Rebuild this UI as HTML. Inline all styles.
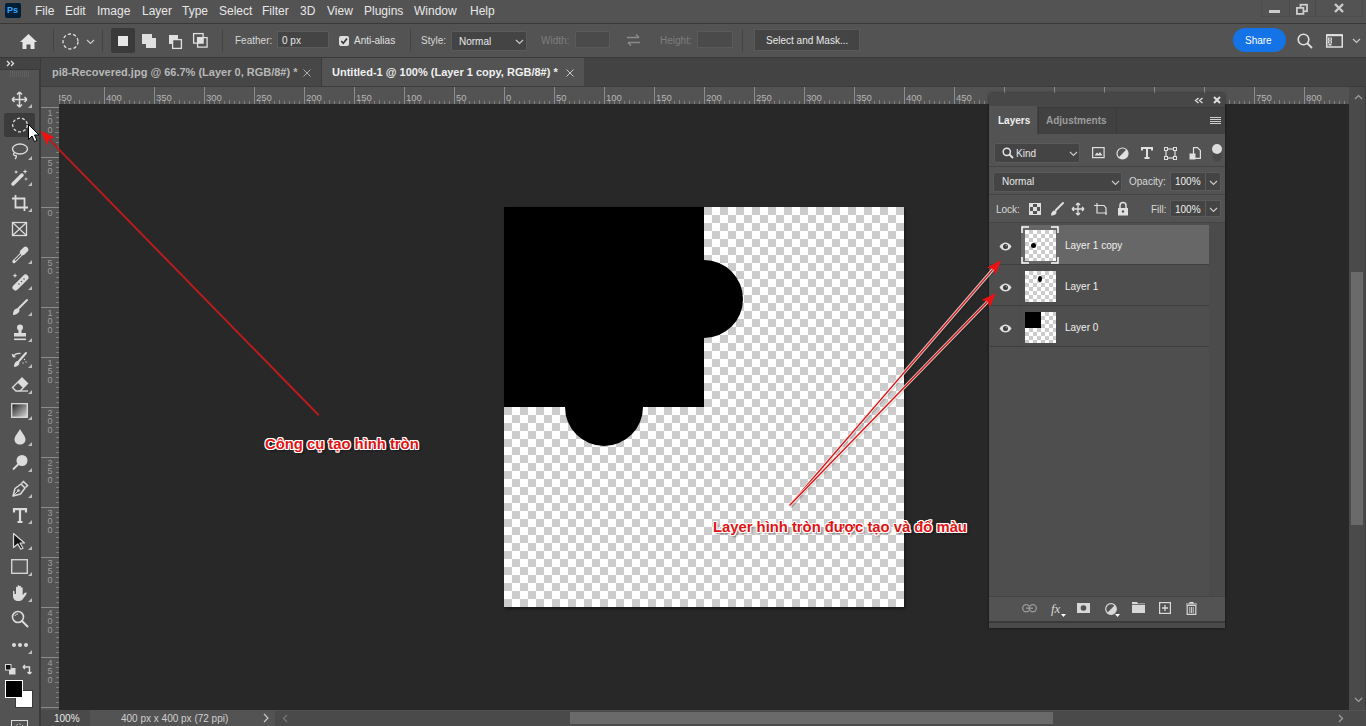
<!DOCTYPE html><html><head><meta charset="utf-8"><title>Photoshop</title><style>
*{box-sizing:border-box;margin:0;padding:0}
html,body{width:1366px;height:726px;overflow:hidden;background:#535353;font-family:"Liberation Sans",sans-serif;}
.a{position:absolute}
.t{position:absolute;white-space:nowrap;line-height:1}
svg{position:absolute;overflow:visible}
</style></head><body>
<div class="a" style="left:0;top:0;width:1366px;height:23px;background:#535353"></div>
<div class="a" style="left:0;top:23px;width:1366px;height:1px;background:#383838"></div>
<div class="a" style="left:5px;top:3px;width:16px;height:15px;background:#001e36;border-radius:2px"></div>
<div class="t" style="left:7px;top:6px;font-size:9px;font-weight:bold;color:#31a8ff">Ps</div>
<div class="t" style="left:35px;top:5px;font-size:12px;color:#e8e8e8">File</div>
<div class="t" style="left:65px;top:5px;font-size:12px;color:#e8e8e8">Edit</div>
<div class="t" style="left:97px;top:5px;font-size:12px;color:#e8e8e8">Image</div>
<div class="t" style="left:142px;top:5px;font-size:12px;color:#e8e8e8">Layer</div>
<div class="t" style="left:182px;top:5px;font-size:12px;color:#e8e8e8">Type</div>
<div class="t" style="left:219px;top:5px;font-size:12px;color:#e8e8e8">Select</div>
<div class="t" style="left:262px;top:5px;font-size:12px;color:#e8e8e8">Filter</div>
<div class="t" style="left:300px;top:5px;font-size:12px;color:#e8e8e8">3D</div>
<div class="t" style="left:327px;top:5px;font-size:12px;color:#e8e8e8">View</div>
<div class="t" style="left:364px;top:5px;font-size:12px;color:#e8e8e8">Plugins</div>
<div class="t" style="left:414px;top:5px;font-size:12px;color:#e8e8e8">Window</div>
<div class="t" style="left:470px;top:5px;font-size:12px;color:#e8e8e8">Help</div>
<div class="a" style="left:1261px;top:0;width:102px;height:17px;border:1px solid #4c4c4c;border-top:none"></div>
<div class="a" style="left:1289px;top:0;width:1px;height:16px;background:#4a4a4a"></div>
<div class="a" style="left:1315px;top:0;width:1px;height:16px;background:#4a4a4a"></div>
<div class="a" style="left:1269px;top:10px;width:11px;height:3px;background:#cccccc"></div>
<svg style="left:1296px;top:4px" width="12" height="10"><rect x="4.5" y="0.75" width="6.5" height="6.5" fill="none" stroke="#cccccc" stroke-width="1.8"/><rect x="0.9" y="3.9" width="6.5" height="6" fill="#535353" stroke="#cccccc" stroke-width="1.8"/></svg>
<svg style="left:1334px;top:3px" width="10" height="10"><path d="M1 1L9 9M9 1L1 9" stroke="#cccccc" stroke-width="2.4"/></svg>
<div class="a" style="left:0;top:24px;width:1366px;height:33px;background:#535353"></div>
<div class="a" style="left:0;top:57px;width:1366px;height:1px;background:#383838"></div>
<svg style="left:20px;top:34px" width="17" height="15"><path d="M8.5 0L17 8H14.5V15H10.5V10.5H6.5V15H2.5V8H0Z" fill="#e6e6e6"/></svg>
<div class="a" style="left:53px;top:29px;width:1px;height:23px;background:#444"></div>
<div class="a" style="left:102px;top:29px;width:1px;height:23px;background:#444"></div>
<div class="a" style="left:222px;top:29px;width:1px;height:23px;background:#444"></div>
<div class="a" style="left:410px;top:29px;width:1px;height:23px;background:#444"></div>
<div class="a" style="left:742px;top:29px;width:1px;height:23px;background:#444"></div>
<svg style="left:62px;top:33px" width="17" height="17"><circle cx="8.5" cy="8.5" r="7.5" fill="none" stroke="#e0e0e0" stroke-width="1.3" stroke-dasharray="3.2 2.2"/></svg>
<svg style="left:86px;top:39px" width="9" height="6"><path d="M1 1L4.5 4.5L8 1" fill="none" stroke="#c8c8c8" stroke-width="1.2"/></svg>
<div class="a" style="left:111px;top:28px;width:24px;height:25px;background:#3a3a3a;border-radius:2px"></div>
<div class="a" style="left:118px;top:36px;width:10px;height:10px;background:#e6e6e6"></div>
<svg style="left:142px;top:34px" width="16" height="16"><rect x="0" y="0" width="10" height="10" fill="#e0e0e0"/><rect x="4" y="4" width="10" height="10" fill="#e0e0e0"/></svg>
<svg style="left:169px;top:35px" width="16" height="16"><rect x="0" y="0" width="9" height="9" fill="#e0e0e0"/><rect x="3.6" y="4.6" width="8.8" height="8.8" fill="#535353" stroke="#e0e0e0" stroke-width="1.3"/></svg>
<svg style="left:193px;top:33px" width="16" height="16"><rect x="0.6" y="0.6" width="9.5" height="9.5" fill="none" stroke="#e0e0e0" stroke-width="1.3"/><rect x="4.6" y="4.6" width="9.5" height="9.5" fill="none" stroke="#e0e0e0" stroke-width="1.3"/><rect x="4.6" y="4.6" width="5.5" height="5.5" fill="#e0e0e0"/></svg>
<div class="t" style="left:235px;top:36px;font-size:10px;color:#d8d8d8">Feather:</div>
<div class="a" style="left:277px;top:31px;width:52px;height:17px;background:#444444;border:1px solid #5a5a5a"></div>
<div class="t" style="left:282px;top:36px;font-size:10px;color:#e8e8e8">0 px</div>
<div class="a" style="left:339px;top:36px;width:10px;height:10px;background:#dedede;border-radius:2px"></div>
<svg style="left:340px;top:37px" width="8" height="8"><path d="M1.2 4L3.3 6.2L7 1.5" fill="none" stroke="#333" stroke-width="1.6"/></svg>
<div class="t" style="left:354px;top:36px;font-size:10px;color:#e0e0e0">Anti-alias</div>
<div class="t" style="left:421px;top:36px;font-size:10px;color:#d8d8d8">Style:</div>
<div class="a" style="left:451px;top:31px;width:76px;height:20px;background:#444444;border:1px solid #5a5a5a;border-radius:1px"></div>
<div class="t" style="left:459px;top:37px;font-size:10px;color:#e8e8e8">Normal</div>
<svg style="left:515px;top:39px" width="9" height="6"><path d="M1 1L4.5 4.5L8 1" fill="none" stroke="#c8c8c8" stroke-width="1.2"/></svg>
<div class="t" style="left:541px;top:36px;font-size:10px;color:#7e7e7e">Width:</div>
<div class="a" style="left:575px;top:31px;width:35px;height:17px;background:#4a4a4a;border:1px solid #5a5a5a"></div>
<svg style="left:626px;top:33px" width="15" height="14"><path d="M1 4.5H13M10 1.5L13 4.5M14 9.5H2M5 12.5L2 9.5" fill="none" stroke="#8a8a8a" stroke-width="1.6"/></svg>
<div class="t" style="left:660px;top:36px;font-size:10px;color:#7e7e7e">Height:</div>
<div class="a" style="left:697px;top:31px;width:36px;height:17px;background:#4a4a4a;border:1px solid #5a5a5a"></div>
<div class="a" style="left:754px;top:29px;width:106px;height:22px;background:#444444;border:1px solid #5a5a5a"></div>
<div class="t" style="left:766px;top:36px;font-size:10px;color:#e8e8e8">Select and Mask...</div>
<div class="a" style="left:1233px;top:28px;width:53px;height:24px;background:#1473e6;border-radius:12px"></div>
<div class="t" style="left:1245px;top:36px;font-size:10px;color:#fff">Share</div>
<svg style="left:1297px;top:33px" width="16" height="16"><circle cx="6.5" cy="6.5" r="5.3" fill="none" stroke="#e0e0e0" stroke-width="1.6"/><path d="M10.5 10.5L15 15" stroke="#e0e0e0" stroke-width="1.8"/></svg>
<svg style="left:1326px;top:34px" width="18" height="14"><rect x="0.75" y="1" width="15.5" height="12" fill="none" stroke="#e0e0e0" stroke-width="1.5"/><path d="M0.5 1.2H16.5" stroke="#e0e0e0" stroke-width="2"/><rect x="2.5" y="4" width="3" height="2" fill="none" stroke="#e0e0e0" stroke-width="0.9"/><rect x="2.5" y="7" width="3" height="2" fill="none" stroke="#e0e0e0" stroke-width="0.9"/><rect x="2.5" y="10" width="3" height="1.5" fill="#e0e0e0"/></svg>
<svg style="left:1352px;top:38px" width="9" height="6"><path d="M1 1L4.5 4.5L8 1" fill="none" stroke="#c8c8c8" stroke-width="1.2"/></svg>
<div class="a" style="left:39px;top:58px;width:1327px;height:29px;background:#434343"></div>
<div class="a" style="left:41px;top:58px;width:280px;height:28px;background:#474747"></div>
<div class="t" style="left:52px;top:67px;font-size:11px;font-weight:bold;color:#b8b8b8">pi8-Recovered.jpg @ 66.7% (Layer 0, RGB/8#) *</div>
<svg style="left:303px;top:69px" width="8" height="8"><path d="M0.5 0.5L7.5 7.5M7.5 0.5L0.5 7.5" stroke="#b0b0b0" stroke-width="1"/></svg>
<div class="a" style="left:322px;top:58px;width:262px;height:28px;background:#535353"></div>
<div class="t" style="left:332px;top:67px;font-size:11px;font-weight:bold;color:#f0f0f0">Untitled-1 @ 100% (Layer 1 copy, RGB/8#) *</div>
<svg style="left:566px;top:69px" width="8" height="8"><path d="M0.5 0.5L7.5 7.5M7.5 0.5L0.5 7.5" stroke="#c8c8c8" stroke-width="1"/></svg>
<div class="a" style="left:41px;top:86px;width:1325px;height:1px;background:#3c3c3c"></div>
<div class="a" style="left:321px;top:58px;width:1px;height:28px;background:#3c3c3c"></div>
<div class="a" style="left:0;top:58px;width:39px;height:668px;background:#535353"></div>
<div class="a" style="left:39px;top:58px;width:2px;height:668px;background:#3b3b3b"></div>
<div class="a" style="left:0;top:58px;width:40px;height:11px;background:#434343"></div>
<div class="a" style="left:0;top:69px;width:40px;height:1px;background:#3a3a3a"></div>
<svg style="left:6px;top:60px" width="9" height="7"><path d="M1 1L3.5 3.5L1 6M5 1L7.5 3.5L5 6" fill="none" stroke="#e0e0e0" stroke-width="1.3"/></svg>
<svg style="left:10px;top:71px" width="20" height="6"><path d="M0.5 0V6M2.5 0V6M4.5 0V6M6.5 0V6M8.5 0V6M10.5 0V6M12.5 0V6M14.5 0V6M16.5 0V6M18.5 0V6" stroke="#5e5e5e" stroke-width="1"/></svg>
<div class="a" style="left:4px;top:113px;width:31px;height:24px;background:#3b3b3b;border-radius:2px"></div>
<svg style="left:11px;top:91px" width="17" height="17"><path d="M8.5 1V16M1 8.5H16M8.5 1L6 3.5M8.5 1L11 3.5M8.5 16L6 13.5M8.5 16L11 13.5M1 8.5L3.5 6M1 8.5L3.5 11M16 8.5L13.5 6M16 8.5L13.5 11" fill="none" stroke="#dcdcdc" stroke-width="1.5"/></svg>
<svg style="left:28px;top:104px" width="4" height="4"><path d="M4 0V4H0Z" fill="#bdbdbd"/></svg>
<svg style="left:12px;top:117px" width="17" height="16"><ellipse cx="8" cy="8" rx="7.3" ry="6.8" fill="none" stroke="#dcdcdc" stroke-width="1.3" stroke-dasharray="3 2"/></svg>
<svg style="left:11px;top:143px" width="18" height="17"><ellipse cx="9" cy="6" rx="7.5" ry="5" fill="none" stroke="#dcdcdc" stroke-width="1.4"/><path d="M3.5 9.5C1.5 11 3 13 5 12.5C6 14 4.5 15.5 4 16" fill="none" stroke="#dcdcdc" stroke-width="1.4"/></svg>
<svg style="left:28px;top:156px" width="4" height="4"><path d="M4 0V4H0Z" fill="#bdbdbd"/></svg>
<svg style="left:11px;top:168px" width="18" height="18"><path d="M2 16L11 7" stroke="#dcdcdc" stroke-width="3.5" stroke-linecap="round"/><path d="M5 2L5.8 3.6 7.4 4 5.8 4.6 5 6 4.4 4.6 3 4 4.4 3.6Z M14 1L14.8 3 16.6 3.6 14.8 4.2 14 6 13.4 4.2 11.6 3.6 13.4 3Z M15 9L15.5 10.5 17 11 15.5 11.5 15 13 14.5 11.5 13 11 14.5 10.5Z" fill="#dcdcdc"/></svg>
<svg style="left:28px;top:182px" width="4" height="4"><path d="M4 0V4H0Z" fill="#bdbdbd"/></svg>
<svg style="left:11px;top:194px" width="18" height="18"><path d="M4.5 1V13.5H17M1 4.5H13.5V17" fill="none" stroke="#dcdcdc" stroke-width="1.8"/></svg>
<svg style="left:28px;top:208px" width="4" height="4"><path d="M4 0V4H0Z" fill="#bdbdbd"/></svg>
<svg style="left:11px;top:221px" width="17" height="16"><rect x="1.5" y="1.5" width="14" height="13" fill="none" stroke="#dcdcdc" stroke-width="1.3"/><path d="M1.5 1.5L15.5 14.5M15.5 1.5L1.5 14.5" stroke="#dcdcdc" stroke-width="1.2"/></svg>
<svg style="left:11px;top:246px" width="18" height="18"><path d="M3 15.5L10.5 8" stroke="#dcdcdc" stroke-width="3.2" stroke-linecap="round"/><path d="M4 14.5L10 8.5" stroke="#535353" stroke-width="1.2"/><path d="M9 5.5L12.5 9M12 3L15 6M13.5 1.5C15 0.5 17.5 3 16.5 4.5L13 8L10 5Z" fill="#dcdcdc" stroke="#dcdcdc" stroke-width="1.5"/></svg>
<svg style="left:28px;top:260px" width="4" height="4"><path d="M4 0V4H0Z" fill="#bdbdbd"/></svg>
<svg style="left:11px;top:272px" width="18" height="18"><path d="M4.5 15.5L14.5 5.5" stroke="#dcdcdc" stroke-width="6" stroke-linecap="round"/><circle cx="8" cy="12" r="0.8" fill="#535353"/><circle cx="10.5" cy="9.5" r="0.8" fill="#535353"/><circle cx="13" cy="7" r="0.8" fill="#535353"/><path d="M4 1L4.7 3 6.5 3.7 4.7 4.3 4 6 3.3 4.3 1.5 3.7 3.3 3Z" fill="#dcdcdc"/></svg>
<svg style="left:28px;top:286px" width="4" height="4"><path d="M4 0V4H0Z" fill="#bdbdbd"/></svg>
<svg style="left:11px;top:298px" width="18" height="18"><path d="M7.5 10.5L16 2" stroke="#dcdcdc" stroke-width="2" stroke-linecap="round"/><path d="M2 17C2 13 3.5 10.5 6.5 10.5C8.5 10.5 9 12.5 8 14C7 15.5 5 17 2 17Z" fill="#dcdcdc"/></svg>
<svg style="left:28px;top:312px" width="4" height="4"><path d="M4 0V4H0Z" fill="#bdbdbd"/></svg>
<svg style="left:11px;top:324px" width="18" height="18"><circle cx="9" cy="3.5" r="3" fill="#dcdcdc"/><path d="M7.5 6H10.5V9H15V12.5H3V9H7.5Z" fill="#dcdcdc"/><rect x="3" y="14.5" width="12" height="1.6" fill="#dcdcdc"/></svg>
<svg style="left:28px;top:338px" width="4" height="4"><path d="M4 0V4H0Z" fill="#bdbdbd"/></svg>
<svg style="left:11px;top:350px" width="18" height="18"><path d="M8 11L15 3" stroke="#dcdcdc" stroke-width="2" stroke-linecap="round"/><path d="M3 17C3 13.5 4.5 11 7 11C8.5 11 9 13 8 14.5C7 16 5 17 3 17Z" fill="#dcdcdc"/><path d="M9.5 3.5C6 3 3.5 4.5 2 6.5M2 6.5L1.5 4M2 6.5L4.5 6.8" fill="none" stroke="#dcdcdc" stroke-width="1.3"/><circle cx="13.5" cy="9.5" r="0.7" fill="#dcdcdc"/><circle cx="15" cy="12" r="0.7" fill="#dcdcdc"/><circle cx="12" cy="13" r="0.7" fill="#dcdcdc"/></svg>
<svg style="left:28px;top:364px" width="4" height="4"><path d="M4 0V4H0Z" fill="#bdbdbd"/></svg>
<svg style="left:11px;top:376px" width="18" height="18"><path d="M11 2L16.5 7.5L9 15H5L1.5 11.5Z" fill="none" stroke="#dcdcdc" stroke-width="1.4"/><path d="M11 2L16.5 7.5L12 12L6.5 6.5Z" fill="#dcdcdc"/><path d="M9 15H17" stroke="#dcdcdc" stroke-width="1.3"/></svg>
<svg style="left:28px;top:390px" width="4" height="4"><path d="M4 0V4H0Z" fill="#bdbdbd"/></svg>
<svg style="left:11px;top:403px" width="17" height="15"><defs><linearGradient id="gr" x1="0" y1="0" x2="1" y2="1"><stop offset="0" stop-color="#1e1e1e"/><stop offset="1" stop-color="#dcdcdc"/></linearGradient></defs><rect x="0.7" y="0.7" width="15.6" height="13.6" fill="url(#gr)" stroke="#dcdcdc" stroke-width="1.3"/></svg>
<svg style="left:28px;top:416px" width="4" height="4"><path d="M4 0V4H0Z" fill="#bdbdbd"/></svg>
<svg style="left:13px;top:428px" width="14" height="17"><path d="M7 1C9 5 12.5 8 12.5 11.5C12.5 14.5 10 16.5 7 16.5C4 16.5 1.5 14.5 1.5 11.5C1.5 8 5 5 7 1Z" fill="#dcdcdc"/></svg>
<svg style="left:28px;top:442px" width="4" height="4"><path d="M4 0V4H0Z" fill="#bdbdbd"/></svg>
<svg style="left:11px;top:454px" width="18" height="18"><circle cx="11" cy="6.5" r="5.5" fill="#dcdcdc"/><path d="M7.5 10L2 15.5" stroke="#dcdcdc" stroke-width="1.8"/></svg>
<svg style="left:28px;top:468px" width="4" height="4"><path d="M4 0V4H0Z" fill="#bdbdbd"/></svg>
<svg style="left:11px;top:480px" width="18" height="18"><path d="M2 16L4 8.5L10 4L14 8L9.5 14Z" fill="none" stroke="#dcdcdc" stroke-width="1.5" stroke-linejoin="round"/><path d="M10.5 3.5L12.5 1.5L16.5 5.5L14.5 7.5" fill="none" stroke="#dcdcdc" stroke-width="1.5"/><path d="M2 16L7 11" stroke="#dcdcdc" stroke-width="1"/><circle cx="7.5" cy="10.5" r="1.3" fill="#dcdcdc"/></svg>
<svg style="left:28px;top:494px" width="4" height="4"><path d="M4 0V4H0Z" fill="#bdbdbd"/></svg>
<svg style="left:12px;top:508px" width="16" height="16"><path d="M2 4.5V1.2H14V4.5M8 1.2V14M5.5 14H10.5" fill="none" stroke="#dcdcdc" stroke-width="2.2"/></svg>
<svg style="left:28px;top:520px" width="4" height="4"><path d="M4 0V4H0Z" fill="#bdbdbd"/></svg>
<svg style="left:12px;top:532px" width="15" height="18"><path d="M1.5 1.5L12.5 11H8L11 16.2L8.8 17.2L5.8 12L1.5 15.5Z" fill="#151515" stroke="#dcdcdc" stroke-width="1.2" stroke-linejoin="round"/></svg>
<svg style="left:28px;top:546px" width="4" height="4"><path d="M4 0V4H0Z" fill="#bdbdbd"/></svg>
<svg style="left:11px;top:559px" width="17" height="15"><rect x="0.7" y="0.7" width="15.6" height="13.6" fill="#5a5a5a" stroke="#dcdcdc" stroke-width="1.3"/></svg>
<svg style="left:28px;top:572px" width="4" height="4"><path d="M4 0V4H0Z" fill="#bdbdbd"/></svg>
<svg style="left:11px;top:584px" width="18" height="18"><path d="M5 10V3.5C5 2.5 6.5 2.5 6.5 3.5V8.5V2C6.5 1 8.2 1 8.2 2V8.5V2.5C8.2 1.5 10 1.5 10 2.5V8.5V4C10 3 11.7 3 11.7 4V11C13 9.5 14 8 15.2 8.5C16 9 15.5 10 14.5 11.5L11.5 15.5C10.5 16.8 9 17 7.5 17C4 17 2 15 2 12V7.5C2 6.5 3.5 6.5 3.5 7.5V10Z" fill="#dcdcdc"/></svg>
<svg style="left:28px;top:598px" width="4" height="4"><path d="M4 0V4H0Z" fill="#bdbdbd"/></svg>
<svg style="left:11px;top:610px" width="18" height="18"><circle cx="7" cy="7" r="5.5" fill="none" stroke="#dcdcdc" stroke-width="1.6"/><path d="M11 11L16.5 16.5" stroke="#dcdcdc" stroke-width="2" stroke-linecap="round"/><path d="M4 6C4.5 4.5 5.5 4 7 4" fill="none" stroke="#dcdcdc" stroke-width="1"/></svg>
<svg style="left:10px;top:642px" width="20" height="6"><circle cx="4" cy="3" r="2" fill="#dcdcdc"/><circle cx="10" cy="3" r="2" fill="#dcdcdc"/><circle cx="16" cy="3" r="2" fill="#dcdcdc"/></svg>
<svg style="left:28px;top:650px" width="4" height="4"><path d="M4 0V4H0Z" fill="#bdbdbd"/></svg>
<svg style="left:5px;top:664px" width="11" height="11"><rect x="4" y="4" width="6.5" height="6.5" fill="#dcdcdc"/><rect x="0.5" y="0.5" width="5.5" height="5.5" fill="#111" stroke="#dcdcdc" stroke-width="1"/></svg>
<svg style="left:22px;top:664px" width="11" height="11"><path d="M1 3H7.5V10M1 3L3 1M1 3L3 5M7.5 10L5.5 8M7.5 10L9.5 8" fill="none" stroke="#dcdcdc" stroke-width="1.4"/></svg>
<div class="a" style="left:15px;top:690px;width:18px;height:18px;background:#fff;border:1px solid #3a3a3a"></div>
<div class="a" style="left:5px;top:680px;width:18px;height:18px;background:#000;border:1px solid #fff"></div>
<div class="a" style="left:11px;top:720px;width:17px;height:10px;border:1px solid #dcdcdc"></div>
<svg style="left:13px;top:722px" width="13" height="6"><circle cx="6.5" cy="6" r="4" fill="none" stroke="#dcdcdc" stroke-width="1" stroke-dasharray="1.5 1.5"/></svg>
<div class="a" style="left:41px;top:87px;width:1309px;height:17px;background:#535353"></div>
<div class="a" style="left:41px;top:104px;width:18px;height:606px;background:#535353"></div>
<div class="a" style="left:59px;top:104px;width:1291px;height:606px;background:#282828"></div>
<svg style="left:0;top:0" width="1366" height="726"><path d="M59.5 101V104" stroke="#808080" stroke-width="1"/><path d="M64.5 101V104" stroke="#808080" stroke-width="1"/><path d="M69.5 101V104" stroke="#808080" stroke-width="1"/><path d="M74.5 101V104" stroke="#808080" stroke-width="1"/><path d="M79.5 100V104" stroke="#808080" stroke-width="1"/><path d="M84.5 101V104" stroke="#808080" stroke-width="1"/><path d="M89.5 101V104" stroke="#808080" stroke-width="1"/><path d="M94.5 101V104" stroke="#808080" stroke-width="1"/><path d="M99.5 101V104" stroke="#808080" stroke-width="1"/><path d="M104.5 87V104" stroke="#8c8c8c" stroke-width="1"/><path d="M109.5 101V104" stroke="#808080" stroke-width="1"/><path d="M114.5 101V104" stroke="#808080" stroke-width="1"/><path d="M119.5 101V104" stroke="#808080" stroke-width="1"/><path d="M124.5 101V104" stroke="#808080" stroke-width="1"/><path d="M129.5 100V104" stroke="#808080" stroke-width="1"/><path d="M134.5 101V104" stroke="#808080" stroke-width="1"/><path d="M139.5 101V104" stroke="#808080" stroke-width="1"/><path d="M144.5 101V104" stroke="#808080" stroke-width="1"/><path d="M149.5 101V104" stroke="#808080" stroke-width="1"/><path d="M154.5 87V104" stroke="#8c8c8c" stroke-width="1"/><path d="M159.5 101V104" stroke="#808080" stroke-width="1"/><path d="M164.5 101V104" stroke="#808080" stroke-width="1"/><path d="M169.5 101V104" stroke="#808080" stroke-width="1"/><path d="M174.5 101V104" stroke="#808080" stroke-width="1"/><path d="M179.5 100V104" stroke="#808080" stroke-width="1"/><path d="M184.5 101V104" stroke="#808080" stroke-width="1"/><path d="M189.5 101V104" stroke="#808080" stroke-width="1"/><path d="M194.5 101V104" stroke="#808080" stroke-width="1"/><path d="M199.5 101V104" stroke="#808080" stroke-width="1"/><path d="M204.5 87V104" stroke="#8c8c8c" stroke-width="1"/><path d="M209.5 101V104" stroke="#808080" stroke-width="1"/><path d="M214.5 101V104" stroke="#808080" stroke-width="1"/><path d="M219.5 101V104" stroke="#808080" stroke-width="1"/><path d="M224.5 101V104" stroke="#808080" stroke-width="1"/><path d="M229.5 100V104" stroke="#808080" stroke-width="1"/><path d="M234.5 101V104" stroke="#808080" stroke-width="1"/><path d="M239.5 101V104" stroke="#808080" stroke-width="1"/><path d="M244.5 101V104" stroke="#808080" stroke-width="1"/><path d="M249.5 101V104" stroke="#808080" stroke-width="1"/><path d="M254.5 87V104" stroke="#8c8c8c" stroke-width="1"/><path d="M259.5 101V104" stroke="#808080" stroke-width="1"/><path d="M264.5 101V104" stroke="#808080" stroke-width="1"/><path d="M269.5 101V104" stroke="#808080" stroke-width="1"/><path d="M274.5 101V104" stroke="#808080" stroke-width="1"/><path d="M279.5 100V104" stroke="#808080" stroke-width="1"/><path d="M284.5 101V104" stroke="#808080" stroke-width="1"/><path d="M289.5 101V104" stroke="#808080" stroke-width="1"/><path d="M294.5 101V104" stroke="#808080" stroke-width="1"/><path d="M299.5 101V104" stroke="#808080" stroke-width="1"/><path d="M304.5 87V104" stroke="#8c8c8c" stroke-width="1"/><path d="M309.5 101V104" stroke="#808080" stroke-width="1"/><path d="M314.5 101V104" stroke="#808080" stroke-width="1"/><path d="M319.5 101V104" stroke="#808080" stroke-width="1"/><path d="M324.5 101V104" stroke="#808080" stroke-width="1"/><path d="M329.5 100V104" stroke="#808080" stroke-width="1"/><path d="M334.5 101V104" stroke="#808080" stroke-width="1"/><path d="M339.5 101V104" stroke="#808080" stroke-width="1"/><path d="M344.5 101V104" stroke="#808080" stroke-width="1"/><path d="M349.5 101V104" stroke="#808080" stroke-width="1"/><path d="M354.5 87V104" stroke="#8c8c8c" stroke-width="1"/><path d="M359.5 101V104" stroke="#808080" stroke-width="1"/><path d="M364.5 101V104" stroke="#808080" stroke-width="1"/><path d="M369.5 101V104" stroke="#808080" stroke-width="1"/><path d="M374.5 101V104" stroke="#808080" stroke-width="1"/><path d="M379.5 100V104" stroke="#808080" stroke-width="1"/><path d="M384.5 101V104" stroke="#808080" stroke-width="1"/><path d="M389.5 101V104" stroke="#808080" stroke-width="1"/><path d="M394.5 101V104" stroke="#808080" stroke-width="1"/><path d="M399.5 101V104" stroke="#808080" stroke-width="1"/><path d="M404.5 87V104" stroke="#8c8c8c" stroke-width="1"/><path d="M409.5 101V104" stroke="#808080" stroke-width="1"/><path d="M414.5 101V104" stroke="#808080" stroke-width="1"/><path d="M419.5 101V104" stroke="#808080" stroke-width="1"/><path d="M424.5 101V104" stroke="#808080" stroke-width="1"/><path d="M429.5 100V104" stroke="#808080" stroke-width="1"/><path d="M434.5 101V104" stroke="#808080" stroke-width="1"/><path d="M439.5 101V104" stroke="#808080" stroke-width="1"/><path d="M444.5 101V104" stroke="#808080" stroke-width="1"/><path d="M449.5 101V104" stroke="#808080" stroke-width="1"/><path d="M454.5 87V104" stroke="#8c8c8c" stroke-width="1"/><path d="M459.5 101V104" stroke="#808080" stroke-width="1"/><path d="M464.5 101V104" stroke="#808080" stroke-width="1"/><path d="M469.5 101V104" stroke="#808080" stroke-width="1"/><path d="M474.5 101V104" stroke="#808080" stroke-width="1"/><path d="M479.5 100V104" stroke="#808080" stroke-width="1"/><path d="M484.5 101V104" stroke="#808080" stroke-width="1"/><path d="M489.5 101V104" stroke="#808080" stroke-width="1"/><path d="M494.5 101V104" stroke="#808080" stroke-width="1"/><path d="M499.5 101V104" stroke="#808080" stroke-width="1"/><path d="M504.5 87V104" stroke="#8c8c8c" stroke-width="1"/><path d="M509.5 101V104" stroke="#808080" stroke-width="1"/><path d="M514.5 101V104" stroke="#808080" stroke-width="1"/><path d="M519.5 101V104" stroke="#808080" stroke-width="1"/><path d="M524.5 101V104" stroke="#808080" stroke-width="1"/><path d="M529.5 100V104" stroke="#808080" stroke-width="1"/><path d="M534.5 101V104" stroke="#808080" stroke-width="1"/><path d="M539.5 101V104" stroke="#808080" stroke-width="1"/><path d="M544.5 101V104" stroke="#808080" stroke-width="1"/><path d="M549.5 101V104" stroke="#808080" stroke-width="1"/><path d="M554.5 87V104" stroke="#8c8c8c" stroke-width="1"/><path d="M559.5 101V104" stroke="#808080" stroke-width="1"/><path d="M564.5 101V104" stroke="#808080" stroke-width="1"/><path d="M569.5 101V104" stroke="#808080" stroke-width="1"/><path d="M574.5 101V104" stroke="#808080" stroke-width="1"/><path d="M579.5 100V104" stroke="#808080" stroke-width="1"/><path d="M584.5 101V104" stroke="#808080" stroke-width="1"/><path d="M589.5 101V104" stroke="#808080" stroke-width="1"/><path d="M594.5 101V104" stroke="#808080" stroke-width="1"/><path d="M599.5 101V104" stroke="#808080" stroke-width="1"/><path d="M604.5 87V104" stroke="#8c8c8c" stroke-width="1"/><path d="M609.5 101V104" stroke="#808080" stroke-width="1"/><path d="M614.5 101V104" stroke="#808080" stroke-width="1"/><path d="M619.5 101V104" stroke="#808080" stroke-width="1"/><path d="M624.5 101V104" stroke="#808080" stroke-width="1"/><path d="M629.5 100V104" stroke="#808080" stroke-width="1"/><path d="M634.5 101V104" stroke="#808080" stroke-width="1"/><path d="M639.5 101V104" stroke="#808080" stroke-width="1"/><path d="M644.5 101V104" stroke="#808080" stroke-width="1"/><path d="M649.5 101V104" stroke="#808080" stroke-width="1"/><path d="M654.5 87V104" stroke="#8c8c8c" stroke-width="1"/><path d="M659.5 101V104" stroke="#808080" stroke-width="1"/><path d="M664.5 101V104" stroke="#808080" stroke-width="1"/><path d="M669.5 101V104" stroke="#808080" stroke-width="1"/><path d="M674.5 101V104" stroke="#808080" stroke-width="1"/><path d="M679.5 100V104" stroke="#808080" stroke-width="1"/><path d="M684.5 101V104" stroke="#808080" stroke-width="1"/><path d="M689.5 101V104" stroke="#808080" stroke-width="1"/><path d="M694.5 101V104" stroke="#808080" stroke-width="1"/><path d="M699.5 101V104" stroke="#808080" stroke-width="1"/><path d="M704.5 87V104" stroke="#8c8c8c" stroke-width="1"/><path d="M709.5 101V104" stroke="#808080" stroke-width="1"/><path d="M714.5 101V104" stroke="#808080" stroke-width="1"/><path d="M719.5 101V104" stroke="#808080" stroke-width="1"/><path d="M724.5 101V104" stroke="#808080" stroke-width="1"/><path d="M729.5 100V104" stroke="#808080" stroke-width="1"/><path d="M734.5 101V104" stroke="#808080" stroke-width="1"/><path d="M739.5 101V104" stroke="#808080" stroke-width="1"/><path d="M744.5 101V104" stroke="#808080" stroke-width="1"/><path d="M749.5 101V104" stroke="#808080" stroke-width="1"/><path d="M754.5 87V104" stroke="#8c8c8c" stroke-width="1"/><path d="M759.5 101V104" stroke="#808080" stroke-width="1"/><path d="M764.5 101V104" stroke="#808080" stroke-width="1"/><path d="M769.5 101V104" stroke="#808080" stroke-width="1"/><path d="M774.5 101V104" stroke="#808080" stroke-width="1"/><path d="M779.5 100V104" stroke="#808080" stroke-width="1"/><path d="M784.5 101V104" stroke="#808080" stroke-width="1"/><path d="M789.5 101V104" stroke="#808080" stroke-width="1"/><path d="M794.5 101V104" stroke="#808080" stroke-width="1"/><path d="M799.5 101V104" stroke="#808080" stroke-width="1"/><path d="M804.5 87V104" stroke="#8c8c8c" stroke-width="1"/><path d="M809.5 101V104" stroke="#808080" stroke-width="1"/><path d="M814.5 101V104" stroke="#808080" stroke-width="1"/><path d="M819.5 101V104" stroke="#808080" stroke-width="1"/><path d="M824.5 101V104" stroke="#808080" stroke-width="1"/><path d="M829.5 100V104" stroke="#808080" stroke-width="1"/><path d="M834.5 101V104" stroke="#808080" stroke-width="1"/><path d="M839.5 101V104" stroke="#808080" stroke-width="1"/><path d="M844.5 101V104" stroke="#808080" stroke-width="1"/><path d="M849.5 101V104" stroke="#808080" stroke-width="1"/><path d="M854.5 87V104" stroke="#8c8c8c" stroke-width="1"/><path d="M859.5 101V104" stroke="#808080" stroke-width="1"/><path d="M864.5 101V104" stroke="#808080" stroke-width="1"/><path d="M869.5 101V104" stroke="#808080" stroke-width="1"/><path d="M874.5 101V104" stroke="#808080" stroke-width="1"/><path d="M879.5 100V104" stroke="#808080" stroke-width="1"/><path d="M884.5 101V104" stroke="#808080" stroke-width="1"/><path d="M889.5 101V104" stroke="#808080" stroke-width="1"/><path d="M894.5 101V104" stroke="#808080" stroke-width="1"/><path d="M899.5 101V104" stroke="#808080" stroke-width="1"/><path d="M904.5 87V104" stroke="#8c8c8c" stroke-width="1"/><path d="M909.5 101V104" stroke="#808080" stroke-width="1"/><path d="M914.5 101V104" stroke="#808080" stroke-width="1"/><path d="M919.5 101V104" stroke="#808080" stroke-width="1"/><path d="M924.5 101V104" stroke="#808080" stroke-width="1"/><path d="M929.5 100V104" stroke="#808080" stroke-width="1"/><path d="M934.5 101V104" stroke="#808080" stroke-width="1"/><path d="M939.5 101V104" stroke="#808080" stroke-width="1"/><path d="M944.5 101V104" stroke="#808080" stroke-width="1"/><path d="M949.5 101V104" stroke="#808080" stroke-width="1"/><path d="M954.5 87V104" stroke="#8c8c8c" stroke-width="1"/><path d="M959.5 101V104" stroke="#808080" stroke-width="1"/><path d="M964.5 101V104" stroke="#808080" stroke-width="1"/><path d="M969.5 101V104" stroke="#808080" stroke-width="1"/><path d="M974.5 101V104" stroke="#808080" stroke-width="1"/><path d="M979.5 100V104" stroke="#808080" stroke-width="1"/><path d="M984.5 101V104" stroke="#808080" stroke-width="1"/><path d="M989.5 101V104" stroke="#808080" stroke-width="1"/><path d="M994.5 101V104" stroke="#808080" stroke-width="1"/><path d="M999.5 101V104" stroke="#808080" stroke-width="1"/><path d="M1004.5 87V104" stroke="#8c8c8c" stroke-width="1"/><path d="M1009.5 101V104" stroke="#808080" stroke-width="1"/><path d="M1014.5 101V104" stroke="#808080" stroke-width="1"/><path d="M1019.5 101V104" stroke="#808080" stroke-width="1"/><path d="M1024.5 101V104" stroke="#808080" stroke-width="1"/><path d="M1029.5 100V104" stroke="#808080" stroke-width="1"/><path d="M1034.5 101V104" stroke="#808080" stroke-width="1"/><path d="M1039.5 101V104" stroke="#808080" stroke-width="1"/><path d="M1044.5 101V104" stroke="#808080" stroke-width="1"/><path d="M1049.5 101V104" stroke="#808080" stroke-width="1"/><path d="M1054.5 87V104" stroke="#8c8c8c" stroke-width="1"/><path d="M1059.5 101V104" stroke="#808080" stroke-width="1"/><path d="M1064.5 101V104" stroke="#808080" stroke-width="1"/><path d="M1069.5 101V104" stroke="#808080" stroke-width="1"/><path d="M1074.5 101V104" stroke="#808080" stroke-width="1"/><path d="M1079.5 100V104" stroke="#808080" stroke-width="1"/><path d="M1084.5 101V104" stroke="#808080" stroke-width="1"/><path d="M1089.5 101V104" stroke="#808080" stroke-width="1"/><path d="M1094.5 101V104" stroke="#808080" stroke-width="1"/><path d="M1099.5 101V104" stroke="#808080" stroke-width="1"/><path d="M1104.5 87V104" stroke="#8c8c8c" stroke-width="1"/><path d="M1109.5 101V104" stroke="#808080" stroke-width="1"/><path d="M1114.5 101V104" stroke="#808080" stroke-width="1"/><path d="M1119.5 101V104" stroke="#808080" stroke-width="1"/><path d="M1124.5 101V104" stroke="#808080" stroke-width="1"/><path d="M1129.5 100V104" stroke="#808080" stroke-width="1"/><path d="M1134.5 101V104" stroke="#808080" stroke-width="1"/><path d="M1139.5 101V104" stroke="#808080" stroke-width="1"/><path d="M1144.5 101V104" stroke="#808080" stroke-width="1"/><path d="M1149.5 101V104" stroke="#808080" stroke-width="1"/><path d="M1154.5 87V104" stroke="#8c8c8c" stroke-width="1"/><path d="M1159.5 101V104" stroke="#808080" stroke-width="1"/><path d="M1164.5 101V104" stroke="#808080" stroke-width="1"/><path d="M1169.5 101V104" stroke="#808080" stroke-width="1"/><path d="M1174.5 101V104" stroke="#808080" stroke-width="1"/><path d="M1179.5 100V104" stroke="#808080" stroke-width="1"/><path d="M1184.5 101V104" stroke="#808080" stroke-width="1"/><path d="M1189.5 101V104" stroke="#808080" stroke-width="1"/><path d="M1194.5 101V104" stroke="#808080" stroke-width="1"/><path d="M1199.5 101V104" stroke="#808080" stroke-width="1"/><path d="M1204.5 87V104" stroke="#8c8c8c" stroke-width="1"/><path d="M1209.5 101V104" stroke="#808080" stroke-width="1"/><path d="M1214.5 101V104" stroke="#808080" stroke-width="1"/><path d="M1219.5 101V104" stroke="#808080" stroke-width="1"/><path d="M1224.5 101V104" stroke="#808080" stroke-width="1"/><path d="M1229.5 100V104" stroke="#808080" stroke-width="1"/><path d="M1234.5 101V104" stroke="#808080" stroke-width="1"/><path d="M1239.5 101V104" stroke="#808080" stroke-width="1"/><path d="M1244.5 101V104" stroke="#808080" stroke-width="1"/><path d="M1249.5 101V104" stroke="#808080" stroke-width="1"/><path d="M1254.5 87V104" stroke="#8c8c8c" stroke-width="1"/><path d="M1259.5 101V104" stroke="#808080" stroke-width="1"/><path d="M1264.5 101V104" stroke="#808080" stroke-width="1"/><path d="M1269.5 101V104" stroke="#808080" stroke-width="1"/><path d="M1274.5 101V104" stroke="#808080" stroke-width="1"/><path d="M1279.5 100V104" stroke="#808080" stroke-width="1"/><path d="M1284.5 101V104" stroke="#808080" stroke-width="1"/><path d="M1289.5 101V104" stroke="#808080" stroke-width="1"/><path d="M1294.5 101V104" stroke="#808080" stroke-width="1"/><path d="M1299.5 101V104" stroke="#808080" stroke-width="1"/><path d="M1304.5 87V104" stroke="#8c8c8c" stroke-width="1"/><path d="M1309.5 101V104" stroke="#808080" stroke-width="1"/><path d="M1314.5 101V104" stroke="#808080" stroke-width="1"/><path d="M1319.5 101V104" stroke="#808080" stroke-width="1"/><path d="M1324.5 101V104" stroke="#808080" stroke-width="1"/><path d="M1329.5 100V104" stroke="#808080" stroke-width="1"/><path d="M1334.5 101V104" stroke="#808080" stroke-width="1"/><path d="M1339.5 101V104" stroke="#808080" stroke-width="1"/><path d="M1344.5 101V104" stroke="#808080" stroke-width="1"/><path d="M1349.5 101V104" stroke="#808080" stroke-width="1"/><text x="56" y="100.5" font-size="9.5" fill="#b4b4b4" font-family="Liberation Sans">450</text><text x="106" y="100.5" font-size="9.5" fill="#b4b4b4" font-family="Liberation Sans">400</text><text x="156" y="100.5" font-size="9.5" fill="#b4b4b4" font-family="Liberation Sans">350</text><text x="206" y="100.5" font-size="9.5" fill="#b4b4b4" font-family="Liberation Sans">300</text><text x="256" y="100.5" font-size="9.5" fill="#b4b4b4" font-family="Liberation Sans">250</text><text x="306" y="100.5" font-size="9.5" fill="#b4b4b4" font-family="Liberation Sans">200</text><text x="356" y="100.5" font-size="9.5" fill="#b4b4b4" font-family="Liberation Sans">150</text><text x="406" y="100.5" font-size="9.5" fill="#b4b4b4" font-family="Liberation Sans">100</text><text x="456" y="100.5" font-size="9.5" fill="#b4b4b4" font-family="Liberation Sans">50</text><text x="506" y="100.5" font-size="9.5" fill="#b4b4b4" font-family="Liberation Sans">0</text><text x="556" y="100.5" font-size="9.5" fill="#b4b4b4" font-family="Liberation Sans">50</text><text x="606" y="100.5" font-size="9.5" fill="#b4b4b4" font-family="Liberation Sans">100</text><text x="656" y="100.5" font-size="9.5" fill="#b4b4b4" font-family="Liberation Sans">150</text><text x="706" y="100.5" font-size="9.5" fill="#b4b4b4" font-family="Liberation Sans">200</text><text x="756" y="100.5" font-size="9.5" fill="#b4b4b4" font-family="Liberation Sans">250</text><text x="806" y="100.5" font-size="9.5" fill="#b4b4b4" font-family="Liberation Sans">300</text><text x="856" y="100.5" font-size="9.5" fill="#b4b4b4" font-family="Liberation Sans">350</text><text x="906" y="100.5" font-size="9.5" fill="#b4b4b4" font-family="Liberation Sans">400</text><text x="956" y="100.5" font-size="9.5" fill="#b4b4b4" font-family="Liberation Sans">450</text><text x="1006" y="100.5" font-size="9.5" fill="#b4b4b4" font-family="Liberation Sans">500</text><text x="1056" y="100.5" font-size="9.5" fill="#b4b4b4" font-family="Liberation Sans">550</text><text x="1106" y="100.5" font-size="9.5" fill="#b4b4b4" font-family="Liberation Sans">600</text><text x="1156" y="100.5" font-size="9.5" fill="#b4b4b4" font-family="Liberation Sans">650</text><text x="1206" y="100.5" font-size="9.5" fill="#b4b4b4" font-family="Liberation Sans">700</text><text x="1256" y="100.5" font-size="9.5" fill="#b4b4b4" font-family="Liberation Sans">750</text><text x="1306" y="100.5" font-size="9.5" fill="#b4b4b4" font-family="Liberation Sans">800</text><path d="M41 107.5H59" stroke="#8c8c8c" stroke-width="1"/><path d="M56 112.5H59" stroke="#808080" stroke-width="1"/><path d="M56 117.5H59" stroke="#808080" stroke-width="1"/><path d="M56 122.5H59" stroke="#808080" stroke-width="1"/><path d="M56 127.5H59" stroke="#808080" stroke-width="1"/><path d="M55 132.5H59" stroke="#808080" stroke-width="1"/><path d="M56 137.5H59" stroke="#808080" stroke-width="1"/><path d="M56 142.5H59" stroke="#808080" stroke-width="1"/><path d="M56 147.5H59" stroke="#808080" stroke-width="1"/><path d="M56 152.5H59" stroke="#808080" stroke-width="1"/><path d="M41 157.5H59" stroke="#8c8c8c" stroke-width="1"/><path d="M56 162.5H59" stroke="#808080" stroke-width="1"/><path d="M56 167.5H59" stroke="#808080" stroke-width="1"/><path d="M56 172.5H59" stroke="#808080" stroke-width="1"/><path d="M56 177.5H59" stroke="#808080" stroke-width="1"/><path d="M55 182.5H59" stroke="#808080" stroke-width="1"/><path d="M56 187.5H59" stroke="#808080" stroke-width="1"/><path d="M56 192.5H59" stroke="#808080" stroke-width="1"/><path d="M56 197.5H59" stroke="#808080" stroke-width="1"/><path d="M56 202.5H59" stroke="#808080" stroke-width="1"/><path d="M41 207.5H59" stroke="#8c8c8c" stroke-width="1"/><path d="M56 212.5H59" stroke="#808080" stroke-width="1"/><path d="M56 217.5H59" stroke="#808080" stroke-width="1"/><path d="M56 222.5H59" stroke="#808080" stroke-width="1"/><path d="M56 227.5H59" stroke="#808080" stroke-width="1"/><path d="M55 232.5H59" stroke="#808080" stroke-width="1"/><path d="M56 237.5H59" stroke="#808080" stroke-width="1"/><path d="M56 242.5H59" stroke="#808080" stroke-width="1"/><path d="M56 247.5H59" stroke="#808080" stroke-width="1"/><path d="M56 252.5H59" stroke="#808080" stroke-width="1"/><path d="M41 257.5H59" stroke="#8c8c8c" stroke-width="1"/><path d="M56 262.5H59" stroke="#808080" stroke-width="1"/><path d="M56 267.5H59" stroke="#808080" stroke-width="1"/><path d="M56 272.5H59" stroke="#808080" stroke-width="1"/><path d="M56 277.5H59" stroke="#808080" stroke-width="1"/><path d="M55 282.5H59" stroke="#808080" stroke-width="1"/><path d="M56 287.5H59" stroke="#808080" stroke-width="1"/><path d="M56 292.5H59" stroke="#808080" stroke-width="1"/><path d="M56 297.5H59" stroke="#808080" stroke-width="1"/><path d="M56 302.5H59" stroke="#808080" stroke-width="1"/><path d="M41 307.5H59" stroke="#8c8c8c" stroke-width="1"/><path d="M56 312.5H59" stroke="#808080" stroke-width="1"/><path d="M56 317.5H59" stroke="#808080" stroke-width="1"/><path d="M56 322.5H59" stroke="#808080" stroke-width="1"/><path d="M56 327.5H59" stroke="#808080" stroke-width="1"/><path d="M55 332.5H59" stroke="#808080" stroke-width="1"/><path d="M56 337.5H59" stroke="#808080" stroke-width="1"/><path d="M56 342.5H59" stroke="#808080" stroke-width="1"/><path d="M56 347.5H59" stroke="#808080" stroke-width="1"/><path d="M56 352.5H59" stroke="#808080" stroke-width="1"/><path d="M41 357.5H59" stroke="#8c8c8c" stroke-width="1"/><path d="M56 362.5H59" stroke="#808080" stroke-width="1"/><path d="M56 367.5H59" stroke="#808080" stroke-width="1"/><path d="M56 372.5H59" stroke="#808080" stroke-width="1"/><path d="M56 377.5H59" stroke="#808080" stroke-width="1"/><path d="M55 382.5H59" stroke="#808080" stroke-width="1"/><path d="M56 387.5H59" stroke="#808080" stroke-width="1"/><path d="M56 392.5H59" stroke="#808080" stroke-width="1"/><path d="M56 397.5H59" stroke="#808080" stroke-width="1"/><path d="M56 402.5H59" stroke="#808080" stroke-width="1"/><path d="M41 407.5H59" stroke="#8c8c8c" stroke-width="1"/><path d="M56 412.5H59" stroke="#808080" stroke-width="1"/><path d="M56 417.5H59" stroke="#808080" stroke-width="1"/><path d="M56 422.5H59" stroke="#808080" stroke-width="1"/><path d="M56 427.5H59" stroke="#808080" stroke-width="1"/><path d="M55 432.5H59" stroke="#808080" stroke-width="1"/><path d="M56 437.5H59" stroke="#808080" stroke-width="1"/><path d="M56 442.5H59" stroke="#808080" stroke-width="1"/><path d="M56 447.5H59" stroke="#808080" stroke-width="1"/><path d="M56 452.5H59" stroke="#808080" stroke-width="1"/><path d="M41 457.5H59" stroke="#8c8c8c" stroke-width="1"/><path d="M56 462.5H59" stroke="#808080" stroke-width="1"/><path d="M56 467.5H59" stroke="#808080" stroke-width="1"/><path d="M56 472.5H59" stroke="#808080" stroke-width="1"/><path d="M56 477.5H59" stroke="#808080" stroke-width="1"/><path d="M55 482.5H59" stroke="#808080" stroke-width="1"/><path d="M56 487.5H59" stroke="#808080" stroke-width="1"/><path d="M56 492.5H59" stroke="#808080" stroke-width="1"/><path d="M56 497.5H59" stroke="#808080" stroke-width="1"/><path d="M56 502.5H59" stroke="#808080" stroke-width="1"/><path d="M41 507.5H59" stroke="#8c8c8c" stroke-width="1"/><path d="M56 512.5H59" stroke="#808080" stroke-width="1"/><path d="M56 517.5H59" stroke="#808080" stroke-width="1"/><path d="M56 522.5H59" stroke="#808080" stroke-width="1"/><path d="M56 527.5H59" stroke="#808080" stroke-width="1"/><path d="M55 532.5H59" stroke="#808080" stroke-width="1"/><path d="M56 537.5H59" stroke="#808080" stroke-width="1"/><path d="M56 542.5H59" stroke="#808080" stroke-width="1"/><path d="M56 547.5H59" stroke="#808080" stroke-width="1"/><path d="M56 552.5H59" stroke="#808080" stroke-width="1"/><path d="M41 557.5H59" stroke="#8c8c8c" stroke-width="1"/><path d="M56 562.5H59" stroke="#808080" stroke-width="1"/><path d="M56 567.5H59" stroke="#808080" stroke-width="1"/><path d="M56 572.5H59" stroke="#808080" stroke-width="1"/><path d="M56 577.5H59" stroke="#808080" stroke-width="1"/><path d="M55 582.5H59" stroke="#808080" stroke-width="1"/><path d="M56 587.5H59" stroke="#808080" stroke-width="1"/><path d="M56 592.5H59" stroke="#808080" stroke-width="1"/><path d="M56 597.5H59" stroke="#808080" stroke-width="1"/><path d="M56 602.5H59" stroke="#808080" stroke-width="1"/><path d="M41 607.5H59" stroke="#8c8c8c" stroke-width="1"/><path d="M56 612.5H59" stroke="#808080" stroke-width="1"/><path d="M56 617.5H59" stroke="#808080" stroke-width="1"/><path d="M56 622.5H59" stroke="#808080" stroke-width="1"/><path d="M56 627.5H59" stroke="#808080" stroke-width="1"/><path d="M55 632.5H59" stroke="#808080" stroke-width="1"/><path d="M56 637.5H59" stroke="#808080" stroke-width="1"/><path d="M56 642.5H59" stroke="#808080" stroke-width="1"/><path d="M56 647.5H59" stroke="#808080" stroke-width="1"/><path d="M56 652.5H59" stroke="#808080" stroke-width="1"/><path d="M41 657.5H59" stroke="#8c8c8c" stroke-width="1"/><path d="M56 662.5H59" stroke="#808080" stroke-width="1"/><path d="M56 667.5H59" stroke="#808080" stroke-width="1"/><path d="M56 672.5H59" stroke="#808080" stroke-width="1"/><path d="M56 677.5H59" stroke="#808080" stroke-width="1"/><path d="M55 682.5H59" stroke="#808080" stroke-width="1"/><path d="M56 687.5H59" stroke="#808080" stroke-width="1"/><path d="M56 692.5H59" stroke="#808080" stroke-width="1"/><path d="M56 697.5H59" stroke="#808080" stroke-width="1"/><path d="M56 702.5H59" stroke="#808080" stroke-width="1"/><path d="M41 707.5H59" stroke="#8c8c8c" stroke-width="1"/><text x="47.5" y="115.5" font-size="9" fill="#9c9c9c" font-family="Liberation Sans">1</text><text x="47.5" y="124.0" font-size="9" fill="#9c9c9c" font-family="Liberation Sans">0</text><text x="47.5" y="132.5" font-size="9" fill="#9c9c9c" font-family="Liberation Sans">0</text><text x="47.5" y="165.5" font-size="9" fill="#9c9c9c" font-family="Liberation Sans">5</text><text x="47.5" y="174.0" font-size="9" fill="#9c9c9c" font-family="Liberation Sans">0</text><text x="47.5" y="215.5" font-size="9" fill="#9c9c9c" font-family="Liberation Sans">0</text><text x="47.5" y="265.5" font-size="9" fill="#9c9c9c" font-family="Liberation Sans">5</text><text x="47.5" y="274.0" font-size="9" fill="#9c9c9c" font-family="Liberation Sans">0</text><text x="47.5" y="315.5" font-size="9" fill="#9c9c9c" font-family="Liberation Sans">1</text><text x="47.5" y="324.0" font-size="9" fill="#9c9c9c" font-family="Liberation Sans">0</text><text x="47.5" y="332.5" font-size="9" fill="#9c9c9c" font-family="Liberation Sans">0</text><text x="47.5" y="365.5" font-size="9" fill="#9c9c9c" font-family="Liberation Sans">1</text><text x="47.5" y="374.0" font-size="9" fill="#9c9c9c" font-family="Liberation Sans">5</text><text x="47.5" y="382.5" font-size="9" fill="#9c9c9c" font-family="Liberation Sans">0</text><text x="47.5" y="415.5" font-size="9" fill="#9c9c9c" font-family="Liberation Sans">2</text><text x="47.5" y="424.0" font-size="9" fill="#9c9c9c" font-family="Liberation Sans">0</text><text x="47.5" y="432.5" font-size="9" fill="#9c9c9c" font-family="Liberation Sans">0</text><text x="47.5" y="465.5" font-size="9" fill="#9c9c9c" font-family="Liberation Sans">2</text><text x="47.5" y="474.0" font-size="9" fill="#9c9c9c" font-family="Liberation Sans">5</text><text x="47.5" y="482.5" font-size="9" fill="#9c9c9c" font-family="Liberation Sans">0</text><text x="47.5" y="515.5" font-size="9" fill="#9c9c9c" font-family="Liberation Sans">3</text><text x="47.5" y="524.0" font-size="9" fill="#9c9c9c" font-family="Liberation Sans">0</text><text x="47.5" y="532.5" font-size="9" fill="#9c9c9c" font-family="Liberation Sans">0</text><text x="47.5" y="565.5" font-size="9" fill="#9c9c9c" font-family="Liberation Sans">3</text><text x="47.5" y="574.0" font-size="9" fill="#9c9c9c" font-family="Liberation Sans">5</text><text x="47.5" y="582.5" font-size="9" fill="#9c9c9c" font-family="Liberation Sans">0</text><text x="47.5" y="615.5" font-size="9" fill="#9c9c9c" font-family="Liberation Sans">4</text><text x="47.5" y="624.0" font-size="9" fill="#9c9c9c" font-family="Liberation Sans">0</text><text x="47.5" y="632.5" font-size="9" fill="#9c9c9c" font-family="Liberation Sans">0</text><text x="47.5" y="665.5" font-size="9" fill="#9c9c9c" font-family="Liberation Sans">4</text><text x="47.5" y="674.0" font-size="9" fill="#9c9c9c" font-family="Liberation Sans">5</text><text x="47.5" y="682.5" font-size="9" fill="#9c9c9c" font-family="Liberation Sans">0</text><text x="47.5" y="715.5" font-size="9" fill="#9c9c9c" font-family="Liberation Sans">5</text><text x="47.5" y="724.0" font-size="9" fill="#9c9c9c" font-family="Liberation Sans">0</text><text x="47.5" y="732.5" font-size="9" fill="#9c9c9c" font-family="Liberation Sans">0</text></svg>
<div class="a" style="left:41px;top:87px;width:18px;height:17px;background:#535353"></div>
<div class="a" style="left:504px;top:207px;width:400px;height:400px;box-shadow:1px 2px 3px rgba(0,0,0,.45)"></div>
<svg style="left:504px;top:207px" width="400" height="400"><defs><pattern id="ck8" width="16" height="16" patternUnits="userSpaceOnUse"><rect width="16" height="16" fill="#fff"/><rect x="8" y="0" width="8" height="8" fill="#ccc"/><rect x="0" y="8" width="8" height="8" fill="#ccc"/></pattern></defs><rect width="400" height="400" fill="url(#ck8)"/></svg>
<svg style="left:504px;top:207px" width="400" height="400"><rect x="0" y="0" width="200" height="200" fill="#000"/><circle cx="200" cy="92" r="39" fill="#000"/><circle cx="100" cy="200" r="39" fill="#000"/></svg>
<div class="a" style="left:1349px;top:87px;width:17px;height:623px;background:#4a4a4a;border-right:1px solid #3e3e3e"></div>
<div class="a" style="left:1351px;top:272px;width:12px;height:253px;background:#6a6a6a"></div>
<svg style="left:1354px;top:94px" width="9" height="6"><path d="M1 5L4.5 1.5L8 5" fill="none" stroke="#a0a0a0" stroke-width="1.2"/></svg>
<svg style="left:1354px;top:697px" width="9" height="6"><path d="M1 1L4.5 4.5L8 1" fill="none" stroke="#a0a0a0" stroke-width="1.2"/></svg>
<div class="a" style="left:41px;top:710px;width:1325px;height:16px;background:#4a4a4a;border-top:1px solid #525252"></div>
<div class="a" style="left:41px;top:710px;width:49px;height:16px;background:#4a4a4a"></div>
<div class="a" style="left:90px;top:710px;width:185px;height:16px;background:#535353"></div>
<div class="t" style="left:54px;top:714px;font-size:10px;color:#e8e8e8">100%</div>
<div class="t" style="left:121px;top:714px;font-size:10px;color:#d0d0d0">400 px x 400 px (72 ppi)</div>
<svg style="left:263px;top:713px" width="6" height="10"><path d="M1 1L5 5L1 9" fill="none" stroke="#c8c8c8" stroke-width="1.2"/></svg>
<svg style="left:282px;top:714px" width="6" height="9"><path d="M5 1L1.5 4.5L5 8" fill="none" stroke="#777" stroke-width="1.2"/></svg>
<div class="a" style="left:570px;top:712px;width:483px;height:12px;background:#6a6a6a"></div>
<svg style="left:1338px;top:714px" width="6" height="9"><path d="M1 1L4.5 4.5L1 8" fill="none" stroke="#a0a0a0" stroke-width="1.2"/></svg>
<div class="a" style="left:989px;top:93px;width:236px;height:535px;background:#535353;border-radius:4px 4px 0 0;box-shadow:0 0 3px rgba(0,0,0,.5)"></div>
<div class="a" style="left:989px;top:93px;width:236px;height:14px;background:#474747;border-radius:4px 4px 0 0"></div>
<svg style="left:1194px;top:97px" width="10" height="7"><path d="M4.5 1L1.5 3.5L4.5 6M8.5 1L5.5 3.5L8.5 6" fill="none" stroke="#e0e0e0" stroke-width="1.3"/></svg>
<svg style="left:1213px;top:96px" width="8" height="8"><path d="M1 1L7 7M7 1L1 7" stroke="#e0e0e0" stroke-width="2"/></svg>
<div class="a" style="left:989px;top:107px;width:236px;height:27px;background:#414141;border-top:1px solid #3a3a3a"></div>
<div class="a" style="left:989px;top:106px;width:48px;height:29px;background:#535353"></div>
<div class="a" style="left:1038px;top:107px;width:1px;height:27px;background:#3a3a3a"></div>
<div class="a" style="left:1116px;top:107px;width:1px;height:27px;background:#3a3a3a"></div>
<div class="t" style="left:998px;top:116px;font-size:10px;font-weight:bold;color:#f0f0f0">Layers</div>
<div class="t" style="left:1046px;top:116px;font-size:10px;font-weight:bold;color:#9c9c9c">Adjustments</div>
<svg style="left:1210px;top:117px" width="11" height="8"><path d="M0 0.5H11M0 2.5H11M0 4.5H11M0 6.5H11" stroke="#d0d0d0" stroke-width="1"/></svg>
<div class="a" style="left:994px;top:143px;width:86px;height:20px;background:#444444;border:1px solid #5a5a5a;border-radius:2px"></div>
<svg style="left:1002px;top:147px" width="12" height="12"><circle cx="4.8" cy="4.8" r="3.6" fill="none" stroke="#e6e6e6" stroke-width="1.5"/><path d="M7.5 7.5L11 11" stroke="#e6e6e6" stroke-width="1.8"/></svg>
<div class="t" style="left:1016px;top:149px;font-size:10px;color:#e8e8e8">Kind</div>
<svg style="left:1069px;top:151px" width="9" height="6"><path d="M1 1L4.5 4.5L8 1" fill="none" stroke="#c8c8c8" stroke-width="1.2"/></svg>
<svg style="left:1092px;top:147px" width="13" height="12"><rect x="0.6" y="0.6" width="11.5" height="10" fill="none" stroke="#e0e0e0" stroke-width="1.2"/><path d="M2.5 8.5L5 5.5L6.5 7L8 5L10.5 8.5Z" fill="#e0e0e0"/></svg>
<svg style="left:1116px;top:147px" width="13" height="13"><circle cx="6.5" cy="6.5" r="5.5" fill="#535353" stroke="#e0e0e0" stroke-width="1.2"/><path d="M10.4 2.6A5.5 5.5 0 0 1 2.6 10.4Z" fill="#e0e0e0"/></svg>
<svg style="left:1141px;top:147px" width="12" height="12"><path d="M1 3.5V1H11V3.5M6 1V11M3.5 11H8.5" fill="none" stroke="#e0e0e0" stroke-width="2"/></svg>
<svg style="left:1164px;top:147px" width="13" height="13"><rect x="2" y="2" width="9" height="9" fill="none" stroke="#e0e0e0" stroke-width="1.2"/><rect x="0.5" y="0.5" width="3" height="3" fill="#535353" stroke="#e0e0e0" stroke-width="1"/><rect x="9.5" y="0.5" width="3" height="3" fill="#535353" stroke="#e0e0e0" stroke-width="1"/><rect x="0.5" y="9.5" width="3" height="3" fill="#535353" stroke="#e0e0e0" stroke-width="1"/><rect x="9.5" y="9.5" width="3" height="3" fill="#535353" stroke="#e0e0e0" stroke-width="1"/></svg>
<svg style="left:1189px;top:147px" width="12" height="13"><path d="M4.5 0.6H8.5L11.4 3.5V11.4H4.5Z" fill="none" stroke="#e0e0e0" stroke-width="1.2"/><rect x="0.5" y="6.5" width="6" height="6" fill="#e0e0e0"/></svg>
<div class="a" style="left:1212px;top:144px;width:10px;height:18px;background:#484848;border-radius:5px;border:1px solid #4e4e4e"></div>
<div class="a" style="left:1212px;top:144px;width:10px;height:10px;background:#dcdcdc;border-radius:50%"></div>
<div class="a" style="left:989px;top:166px;width:236px;height:1px;background:#444"></div>
<div class="a" style="left:993px;top:172px;width:129px;height:20px;background:#444444;border:1px solid #5a5a5a;border-radius:2px"></div>
<div class="t" style="left:1002px;top:177px;font-size:10px;color:#e8e8e8">Normal</div>
<svg style="left:1111px;top:180px" width="9" height="6"><path d="M1 1L4.5 4.5L8 1" fill="none" stroke="#c8c8c8" stroke-width="1.2"/></svg>
<div class="t" style="left:1129px;top:177px;font-size:10px;color:#d8d8d8">Opacity:</div>
<div class="a" style="left:1170px;top:172px;width:51px;height:19px;background:#444444;border:1px solid #5a5a5a"></div>
<div class="a" style="left:1205px;top:172px;width:1px;height:19px;background:#5a5a5a"></div>
<div class="t" style="left:1175px;top:177px;font-size:10px;color:#f0f0f0">100%</div>
<svg style="left:1209px;top:180px" width="9" height="6"><path d="M1 1L4.5 4.5L8 1" fill="none" stroke="#c8c8c8" stroke-width="1.2"/></svg>
<div class="a" style="left:989px;top:194px;width:236px;height:1px;background:#444"></div>
<div class="t" style="left:996px;top:205px;font-size:10px;color:#d8d8d8">Lock:</div>
<svg style="left:1029px;top:203px" width="12" height="12"><rect x="0.5" y="0.5" width="11" height="11" fill="none" stroke="#e0e0e0" stroke-width="1"/><path d="M1 1H4V4H1ZM8 1H11V4H8ZM4 4H8V8H4ZM1 8H4V11H1ZM8 8H11V11H8Z" fill="#e0e0e0"/></svg>
<svg style="left:1050px;top:202px" width="14" height="14"><path d="M6 8L13 1" stroke="#e0e0e0" stroke-width="2" stroke-linecap="round"/><path d="M1 13.5C1 10.5 2.5 8.5 4.8 8.5C6.5 8.5 7 10 6.2 11.5C5.4 13 3.5 13.5 1 13.5Z" fill="#e0e0e0"/></svg>
<svg style="left:1071px;top:202px" width="14" height="14"><path d="M7 1V13M1 7H13M7 1L5 3M7 1L9 3M7 13L5 11M7 13L9 11M1 7L3 5M1 7L3 9M13 7L11 5M13 7L11 9" fill="none" stroke="#e0e0e0" stroke-width="1.3"/></svg>
<svg style="left:1094px;top:202px" width="15" height="14"><path d="M3 1V11H13M0 3.5H10L12 6V13" fill="none" stroke="#e0e0e0" stroke-width="1.2"/></svg>
<svg style="left:1117px;top:201px" width="12" height="15"><path d="M3 7V4.5A3 3 0 0 1 9 4.5V7" fill="none" stroke="#e0e0e0" stroke-width="1.5"/><rect x="1" y="7" width="10" height="7.5" fill="#e0e0e0"/><circle cx="6" cy="10.5" r="1.2" fill="#535353"/></svg>
<div class="t" style="left:1151px;top:205px;font-size:10px;color:#d8d8d8">Fill:</div>
<div class="a" style="left:1170px;top:200px;width:51px;height:17px;background:#444444;border:1px solid #5a5a5a"></div>
<div class="a" style="left:1205px;top:200px;width:1px;height:17px;background:#5a5a5a"></div>
<div class="t" style="left:1175px;top:205px;font-size:10px;color:#f0f0f0">100%</div>
<svg style="left:1209px;top:207px" width="9" height="6"><path d="M1 1L4.5 4.5L8 1" fill="none" stroke="#c8c8c8" stroke-width="1.2"/></svg>
<div class="a" style="left:989px;top:222px;width:236px;height:1px;background:#444"></div>
<div class="a" style="left:989px;top:223px;width:220px;height:373px;background:#4e4e4e"></div>
<div class="a" style="left:1209px;top:223px;width:16px;height:373px;background:#4b4b4b"></div>
<div class="a" style="left:1021px;top:225px;width:188px;height:39px;background:#676767"></div>
<div class="a" style="left:990px;top:264px;width:219px;height:1px;background:#3e3e3e"></div>
<div class="a" style="left:1020px;top:225px;width:1px;height:39px;background:#4a4a4a"></div>
<svg style="left:999px;top:242px" width="13" height="9"><path d="M0.5 4.5C2.5 1.5 4.5 0.5 6.5 0.5C8.5 0.5 10.5 1.5 12.5 4.5C10.5 7.5 8.5 8.5 6.5 8.5C4.5 8.5 2.5 7.5 0.5 4.5Z" fill="#e0e0e0"/><circle cx="6.5" cy="4.5" r="2.5" fill="#3a3a3a"/><circle cx="7.3" cy="3.7" r="0.7" fill="#aaa"/></svg>
<div class="t" style="left:1065px;top:241px;font-size:10px;color:#f0f0f0">Layer 1 copy</div>
<div class="a" style="left:1021px;top:265px;width:188px;height:40px;background:#4e4e4e"></div>
<div class="a" style="left:990px;top:305px;width:219px;height:1px;background:#3e3e3e"></div>
<div class="a" style="left:1020px;top:265px;width:1px;height:40px;background:#4a4a4a"></div>
<svg style="left:999px;top:283px" width="13" height="9"><path d="M0.5 4.5C2.5 1.5 4.5 0.5 6.5 0.5C8.5 0.5 10.5 1.5 12.5 4.5C10.5 7.5 8.5 8.5 6.5 8.5C4.5 8.5 2.5 7.5 0.5 4.5Z" fill="#e0e0e0"/><circle cx="6.5" cy="4.5" r="2.5" fill="#3a3a3a"/><circle cx="7.3" cy="3.7" r="0.7" fill="#aaa"/></svg>
<div class="t" style="left:1065px;top:282px;font-size:10px;color:#f0f0f0">Layer 1</div>
<div class="a" style="left:1021px;top:306px;width:188px;height:40px;background:#4e4e4e"></div>
<div class="a" style="left:990px;top:346px;width:219px;height:1px;background:#3e3e3e"></div>
<div class="a" style="left:1020px;top:306px;width:1px;height:40px;background:#4a4a4a"></div>
<svg style="left:999px;top:324px" width="13" height="9"><path d="M0.5 4.5C2.5 1.5 4.5 0.5 6.5 0.5C8.5 0.5 10.5 1.5 12.5 4.5C10.5 7.5 8.5 8.5 6.5 8.5C4.5 8.5 2.5 7.5 0.5 4.5Z" fill="#e0e0e0"/><circle cx="6.5" cy="4.5" r="2.5" fill="#3a3a3a"/><circle cx="7.3" cy="3.7" r="0.7" fill="#aaa"/></svg>
<div class="t" style="left:1065px;top:323px;font-size:10px;color:#f0f0f0">Layer 0</div>
<svg style="left:1025px;top:230px" width="31" height="31"><defs><pattern id="ck4_1025_230" width="8" height="8" patternUnits="userSpaceOnUse"><rect width="8" height="8" fill="#fff"/><rect x="4" y="0" width="4" height="4" fill="#ccc"/><rect x="0" y="4" width="4" height="4" fill="#ccc"/></pattern></defs><rect width="31" height="31" fill="url(#ck4_1025_230)"/></svg>
<div class="a" style="left:1031px;top:243px;width:5px;height:5px;background:#000;border-radius:50%"></div>
<svg style="left:1021px;top:226px" width="38" height="38"><path d="M1 7V1H8M30 1H37V7M37 31V37H30M8 37H1V31" fill="none" stroke="#fff" stroke-width="1.5"/></svg>
<svg style="left:1025px;top:271px" width="31" height="31"><defs><pattern id="ck4_1025_271" width="8" height="8" patternUnits="userSpaceOnUse"><rect width="8" height="8" fill="#fff"/><rect x="4" y="0" width="4" height="4" fill="#ccc"/><rect x="0" y="4" width="4" height="4" fill="#ccc"/></pattern></defs><rect width="31" height="31" fill="url(#ck4_1025_271)"/></svg>
<div class="a" style="left:1038px;top:276px;width:4px;height:6px;background:#000;border-radius:50%"></div>
<svg style="left:1025px;top:312px" width="31" height="31"><defs><pattern id="ck4_1025_312" width="8" height="8" patternUnits="userSpaceOnUse"><rect width="8" height="8" fill="#fff"/><rect x="4" y="0" width="4" height="4" fill="#ccc"/><rect x="0" y="4" width="4" height="4" fill="#ccc"/></pattern></defs><rect width="31" height="31" fill="url(#ck4_1025_312)"/></svg>
<div class="a" style="left:1025px;top:312px;width:16px;height:16px;background:#000"></div>
<div class="a" style="left:989px;top:596px;width:236px;height:1px;background:#444"></div>
<div class="a" style="left:989px;top:621px;width:236px;height:2px;background:#3a3a3a"></div>
<div class="a" style="left:989px;top:623px;width:236px;height:5px;background:#4a4a4a"></div>
<svg style="left:1022px;top:604px" width="16" height="9"><rect x="0.7" y="0.7" width="7" height="7" rx="3.5" fill="none" stroke="#9a9a9a" stroke-width="1.3"/><rect x="7.3" y="0.7" width="7" height="7" rx="3.5" fill="none" stroke="#9a9a9a" stroke-width="1.3"/><path d="M4 4.2H11" stroke="#9a9a9a" stroke-width="1.3"/></svg>
<div class="t" style="left:1051px;top:602px;font-size:13px;font-style:italic;color:#d8d8d8;font-family:'Liberation Serif',serif">fx</div>
<svg style="left:1061px;top:614px" width="5" height="3"><path d="M0 0H5L2.5 3Z" fill="#fff"/></svg>
<svg style="left:1077px;top:603px" width="13" height="10"><rect x="0" y="0" width="13" height="10" fill="#d8d8d8"/><circle cx="6.5" cy="5" r="2.8" fill="#535353"/></svg>
<svg style="left:1105px;top:603px" width="12" height="12"><circle cx="6" cy="6" r="5.3" fill="#535353" stroke="#d8d8d8" stroke-width="1.2"/><path d="M9.75 2.25A5.3 5.3 0 0 1 2.25 9.75Z" fill="#d8d8d8"/></svg>
<svg style="left:1115px;top:614px" width="5" height="3"><path d="M0 0H5L2.5 3Z" fill="#fff"/></svg>
<svg style="left:1132px;top:602px" width="13" height="11"><path d="M0 0H5L6 1.5H13V11H0Z" fill="#d8d8d8"/><path d="M0 2.5H13" stroke="#535353" stroke-width="0.8"/></svg>
<svg style="left:1159px;top:602px" width="12" height="12"><rect x="0.6" y="0.6" width="10.8" height="10.8" fill="none" stroke="#d8d8d8" stroke-width="1.2"/><path d="M6 3V9M3 6H9" stroke="#d8d8d8" stroke-width="1.3"/></svg>
<svg style="left:1186px;top:602px" width="11" height="13"><path d="M0 2H11M4 2V0.6H7V2" fill="none" stroke="#d8d8d8" stroke-width="1.2"/><path d="M1.2 3.5H9.8V12.4H1.2Z" fill="none" stroke="#d8d8d8" stroke-width="1.2"/><path d="M3.8 5V11M5.5 5V11M7.2 5V11" stroke="#d8d8d8" stroke-width="0.9"/></svg>
<svg style="left:0;top:0" width="1366" height="726"><path d="M318.3 414.8L49.6 139.9" stroke="#b81c1c" stroke-width="2" stroke-linecap="round"/><path d="M40.5 130.6L54.9 137.5L48.9 139.2L47.1 145.2Z" fill="#ee1111"/><path d="M791.5 506.5L994.0 271.4" stroke="rgba(0,0,0,.12)" stroke-width="2.5" stroke-linecap="round"/><path d="M790 505L992.5 269.9" stroke="rgba(255,235,235,.8)" stroke-width="3.2" stroke-linecap="round"/><path d="M790 505L992.5 269.9" stroke="#d41818" stroke-width="1.3" stroke-linecap="round"/><path d="M1001 260L995.4 275.0L993.2 269.1L987.0 267.8Z" fill="#ee1111"/><path d="M791.5 506.5L988.4 303.8" stroke="rgba(0,0,0,.12)" stroke-width="2.5" stroke-linecap="round"/><path d="M790 505L986.9 302.3" stroke="rgba(255,235,235,.8)" stroke-width="3.2" stroke-linecap="round"/><path d="M790 505L986.9 302.3" stroke="#d41818" stroke-width="1.3" stroke-linecap="round"/><path d="M996 293L989.5 307.6L987.6 301.6L981.6 299.9Z" fill="#ee1111"/></svg>
<svg style="left:28px;top:124px" width="12" height="19"><path d="M0.5 0.5V15.5L4 12L6.5 17.5L9 16.5L6.5 11H11Z" fill="#fff" stroke="#000" stroke-width="1"/></svg>
<div class="t" style="left:265px;top:437px;font-size:14.8px;font-weight:bold;color:#e01414;text-shadow:-1px -1px 0 #fff,1px -1px 0 #fff,-1px 1px 0 #fff,1px 1px 0 #fff,0 -1px 0 #fff,0 1px 0 #fff,-1px 0 0 #fff,1px 0 0 #fff,2px 2px 2px rgba(0,0,0,.5)">Công cụ tạo hình tròn</div>
<div class="t" style="left:713px;top:520px;font-size:14.8px;font-weight:bold;color:#e01414;text-shadow:-1px -1px 0 #fff,1px -1px 0 #fff,-1px 1px 0 #fff,1px 1px 0 #fff,0 -1px 0 #fff,0 1px 0 #fff,-1px 0 0 #fff,1px 0 0 #fff,2px 2px 2px rgba(0,0,0,.5)">Layer hình tròn được tạo và đổ màu</div>
</body></html>
